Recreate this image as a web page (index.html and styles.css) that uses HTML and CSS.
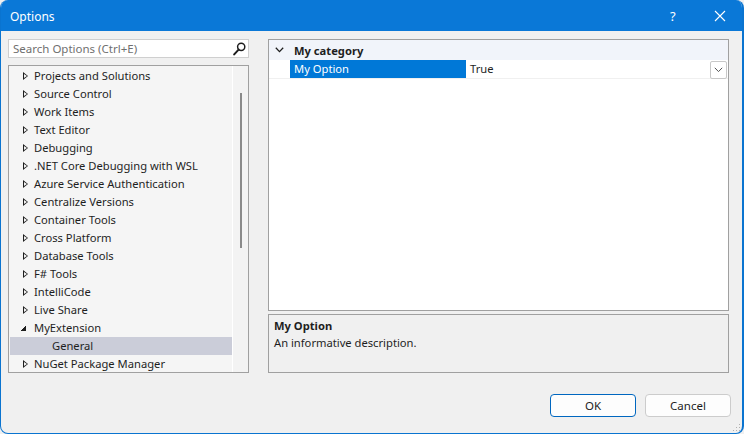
FILE: index.html
```html
<!DOCTYPE html>
<html>
<head>
<meta charset="utf-8">
<link rel="stylesheet" href="styles.css">
</head>
<body>
<div class="window">
  <div class="titlebar">
    <span class="title">Options</span>
    <span class="help">?</span>
    <span class="close"><svg width="12" height="12" viewBox="0 0 12 12"><path d="M1 1L11 11M11 1L1 11" stroke="#fff" stroke-width="1.1" fill="none"/></svg></span>
  </div>
  <div class="content">
    <div class="main">
      <div class="left">
        <div class="search">
          <span class="placeholder">Search Options (Ctrl+E)</span>
          <svg class="mag" width="13" height="14" viewBox="0 0 13 14"><circle cx="8.2" cy="4.8" r="3.6" stroke="#1e1e1e" stroke-width="1.5" fill="none"/><path d="M5.6 7.6L1.2 12.4" stroke="#1e1e1e" stroke-width="2" stroke-linecap="round"/></svg>
        </div>
        <div class="tree">
          <div class="rows">
            <div class="row"><span class="exp"></span>Projects and Solutions</div>
            <div class="row"><span class="exp"></span>Source Control</div>
            <div class="row"><span class="exp"></span>Work Items</div>
            <div class="row"><span class="exp"></span>Text Editor</div>
            <div class="row"><span class="exp"></span>Debugging</div>
            <div class="row"><span class="exp"></span>.NET Core Debugging with WSL</div>
            <div class="row"><span class="exp"></span>Azure Service Authentication</div>
            <div class="row"><span class="exp"></span>Centralize Versions</div>
            <div class="row"><span class="exp"></span>Container Tools</div>
            <div class="row"><span class="exp"></span>Cross Platform</div>
            <div class="row"><span class="exp"></span>Database Tools</div>
            <div class="row"><span class="exp"></span>F# Tools</div>
            <div class="row"><span class="exp"></span>IntelliCode</div>
            <div class="row"><span class="exp"></span>Live Share</div>
            <div class="row"><span class="exp open"></span>MyExtension</div>
            <div class="row child selected">General</div>
            <div class="row"><span class="exp"></span>NuGet Package Manager</div>
          </div>
          <div class="scrollbar"><div class="thumb"></div></div>
        </div>
      </div>
      <div class="right">
        <div class="grid">
          <div class="cat">
            <svg class="chev" width="9" height="6" viewBox="0 0 9 6"><path d="M0.8 0.8L4.5 4.6L8.2 0.8" stroke="#1e1e1e" stroke-width="1.3" fill="none"/></svg>
            <span class="catname">My category</span>
          </div>
          <div class="prop">
            <div class="pmargin"></div>
            <div class="pname">My Option</div>
            <div class="pvalue">True</div>
            <div class="dd"><svg width="9" height="6" viewBox="0 0 9 6"><path d="M0.8 0.8L4.5 4.6L8.2 0.8" stroke="#555" stroke-width="1" fill="none"/></svg></div>
          </div>
        </div>
        <div class="desc">
          <div class="dtitle">My Option</div>
          <div class="dtext">An informative description.</div>
        </div>
      </div>
    </div>
    <div class="buttons">
      <button class="btn ok">OK</button>
      <button class="btn">Cancel</button>
    </div>
  </div>
  <div class="grip"></div>
</div>
</body>
</html>
```

FILE: styles.css
```css
html, body {
  margin: 0;
  padding: 0;
  background: #f0f0f0;
}
body {
  font-family: "Noto Sans", "Open Sans", sans-serif;
  font-size: 11.2px;
  color: #1e1e1e;
}
.window {
  width: 744px;
  height: 434px;
  box-sizing: border-box;
  background: #f0f0f0;
  border: 1px solid #0a74d0;
  border-top: none;
  border-right-width: 2px;
  border-radius: 8px 8px 8px 8px;
  display: flex;
  flex-direction: column;
  position: relative;
  overflow: hidden;
}
.titlebar {
  height: 31px;
  background: #0a78d7;
  color: #fff;
  display: flex;
  align-items: center;
  margin: 0 -2px 0 -1px;
  padding-left: 10px;
  flex-shrink: 0;
}
.title {
  font-size: 12px;
  flex: 1;
  padding-top: 1px;
}
.help {
  font-size: 13px;
  width: 20px;
  margin-right: 24px;
}
.close {
  width: 30px;
  display: flex;
  align-items: center;
  padding-top: 1px;
}
.content {
  flex: 1;
  display: flex;
  flex-direction: column;
  padding: 8px 11px 0 7px;
}
.main {
  display: flex;
  gap: 19px;
}
.left {
  width: 241px;
  display: flex;
  flex-direction: column;
  gap: 7px;
}
.search {
  height: 19px;
  box-sizing: border-box;
  border: 1px solid #cfcfcf;
  background: #fff;
  display: flex;
  align-items: center;
  padding: 0 2px 0 4px;
}
.placeholder {
  flex: 1;
  color: #6f6f6f;
  font-size: 11.5px;
}
.mag {
  display: block;
}
.tree {
  height: 308px;
  box-sizing: border-box;
  border: 1px solid #a0a0a0;
  background: #f5f5f5;
  display: flex;
}
.rows {
  flex: 1;
  padding-top: 1px;
  padding-left: 1px;
}
.row {
  height: 18px;
  line-height: 18px;
  padding-left: 24px;
  white-space: nowrap;
  display: flex;
  align-items: center;
  position: relative;
}
.exp {
  width: 0;
  height: 0;
  margin-left: -11px;
  margin-right: 6px;
  border-left: 5px solid #1e1e1e;
  border-top: 4px solid transparent;
  border-bottom: 4px solid transparent;
  position: relative;
}
.exp::after {
  content: "";
  position: absolute;
  left: -4px;
  top: -2px;
  border-left: 3px solid #f5f5f5;
  border-top: 2px solid transparent;
  border-bottom: 2px solid transparent;
}
.exp.open {
  border: none;
  width: 6px;
  height: 6px;
  margin-left: -14px;
  margin-right: 8px;
  background: linear-gradient(135deg, transparent 50%, #1e1e1e 50%);
}
.exp.open::after {
  display: none;
}
.row.child {
  padding-left: 42px;
}
.row.selected {
  background: #cbcdd9;
}
.scrollbar {
  width: 16px;
  border-left: 1px solid #ffffff;
  background: #f3f3f3;
  display: flex;
  justify-content: center;
  padding-top: 27px;
  box-sizing: border-box;
}
.thumb {
  width: 2px;
  height: 155px;
  background: #8a8a8a;
}
.right {
  width: 461px;
  display: flex;
  flex-direction: column;
  gap: 3px;
}
.grid {
  height: 272px;
  box-sizing: border-box;
  border: 1px solid #a0a0a0;
  background: #fff;
}
.cat {
  height: 20px;
  background: #f1f4fa;
  display: flex;
  align-items: center;
  padding-left: 6px;
}
.chev {
  display: block;
  margin-right: 10px;
}
.catname {
  font-weight: bold;
}
.prop {
  height: 18px;
  display: flex;
  border-bottom: 1px solid #f0f0f0;
}
.pmargin {
  width: 21px;
}
.pname {
  width: 172px;
  background: #0078d7;
  color: #fff;
  padding-left: 4px;
  line-height: 18px;
}
.pvalue {
  flex: 1;
  padding-left: 4px;
  line-height: 18px;
}
.dd {
  width: 15px;
  height: 16px;
  margin: 1px 1px 0 0;
  border: 1px solid #c8c8c8;
  border-radius: 2px;
  display: flex;
  align-items: center;
  justify-content: center;
  background: #fff;
}
.dd svg {
  display: block;
}
.desc {
  height: 59px;
  box-sizing: border-box;
  border: 1px solid #a0a0a0;
  padding: 3px 5px;
}
.dtitle {
  font-weight: bold;
  line-height: 16px;
}
.dtext {
  line-height: 18px;
}
.buttons {
  display: flex;
  justify-content: flex-end;
  gap: 9px;
  margin-top: 21px;
}
.btn {
  width: 86px;
  height: 23px;
  box-sizing: border-box;
  border: 1px solid #cccccc;
  border-radius: 4px;
  background: #fdfdfd;
  font-family: "Noto Sans", "Open Sans", sans-serif;
  font-size: 11.5px;
  color: #1e1e1e;
  padding: 0;
}
.btn.ok {
  border-color: #0067c0;
}
.grip {
  position: absolute;
  right: 2px;
  bottom: 2px;
  width: 8px;
  height: 8px;
  background-image: radial-gradient(circle, #b0b0b0 0.8px, transparent 1px);
  background-size: 3px 3px;
  clip-path: polygon(100% 0, 100% 100%, 0 100%);
}
```
